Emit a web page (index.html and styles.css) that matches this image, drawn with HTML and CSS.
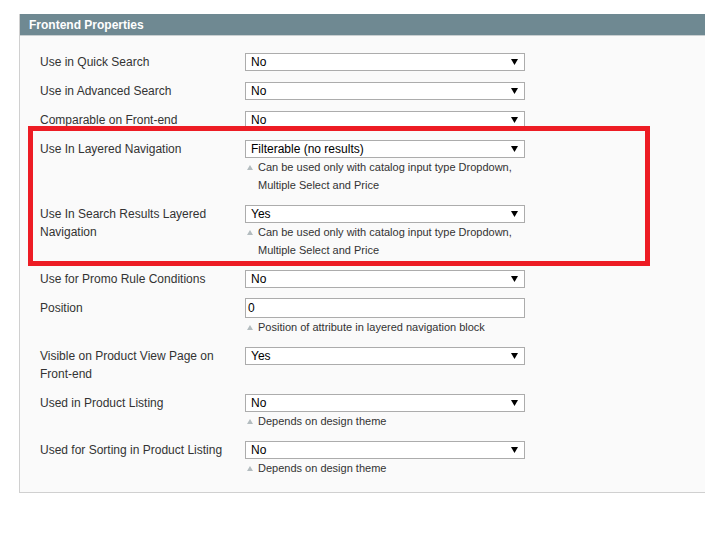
FILE: index.html
```html
<!DOCTYPE html>
<html>
<head>
<meta charset="utf-8">
<link rel="stylesheet" href="styles.css">
</head>
<body>
<div class="panel">
  <div class="panel-head">Frontend Properties</div>
  <div class="panel-body">
    <div class="row">
      <div class="label">Use in Quick Search</div>
      <div class="field"><div class="select"><span>No</span><svg class="arrow" width="7" height="6" viewBox="0 0 7 6"><polygon points="0,0 7,0 3.5,6"/></svg></div></div>
    </div>
    <div class="row">
      <div class="label">Use in Advanced Search</div>
      <div class="field"><div class="select"><span>No</span><svg class="arrow" width="7" height="6" viewBox="0 0 7 6"><polygon points="0,0 7,0 3.5,6"/></svg></div></div>
    </div>
    <div class="row">
      <div class="label">Comparable on Front-end</div>
      <div class="field"><div class="select"><span>No</span><svg class="arrow" width="7" height="6" viewBox="0 0 7 6"><polygon points="0,0 7,0 3.5,6"/></svg></div></div>
    </div>
    <div class="highlight">
      <div class="row">
        <div class="label">Use In Layered Navigation</div>
        <div class="field">
          <div class="select"><span>Filterable (no results)</span><svg class="arrow" width="7" height="6" viewBox="0 0 7 6"><polygon points="0,0 7,0 3.5,6"/></svg></div>
          <div class="note">Can be used only with catalog input type Dropdown, Multiple Select and Price</div>
        </div>
      </div>
      <div class="row">
        <div class="label">Use In Search Results Layered Navigation</div>
        <div class="field">
          <div class="select"><span>Yes</span><svg class="arrow" width="7" height="6" viewBox="0 0 7 6"><polygon points="0,0 7,0 3.5,6"/></svg></div>
          <div class="note">Can be used only with catalog input type Dropdown, Multiple Select and Price</div>
        </div>
      </div>
    </div>
    <div class="row">
      <div class="label">Use for Promo Rule Conditions</div>
      <div class="field"><div class="select"><span>No</span><svg class="arrow" width="7" height="6" viewBox="0 0 7 6"><polygon points="0,0 7,0 3.5,6"/></svg></div></div>
    </div>
    <div class="row row-tight">
      <div class="label label-low">Position</div>
      <div class="field">
        <div class="input">0</div>
        <div class="note">Position of attribute in layered navigation block</div>
      </div>
    </div>
    <div class="row">
      <div class="label">Visible on Product View Page on Front-end</div>
      <div class="field"><div class="select"><span>Yes</span><svg class="arrow" width="7" height="6" viewBox="0 0 7 6"><polygon points="0,0 7,0 3.5,6"/></svg></div></div>
    </div>
    <div class="row">
      <div class="label">Used in Product Listing</div>
      <div class="field">
        <div class="select"><span>No</span><svg class="arrow" width="7" height="6" viewBox="0 0 7 6"><polygon points="0,0 7,0 3.5,6"/></svg></div>
        <div class="note">Depends on design theme</div>
      </div>
    </div>
    <div class="row">
      <div class="label">Used for Sorting in Product Listing</div>
      <div class="field">
        <div class="select"><span>No</span><svg class="arrow" width="7" height="6" viewBox="0 0 7 6"><polygon points="0,0 7,0 3.5,6"/></svg></div>
        <div class="note">Depends on design theme</div>
      </div>
    </div>
  </div>
</div>
</body>
</html>
```

FILE: styles.css
```css
html, body {
  margin: 0;
  padding: 0;
  background: #ffffff;
  overflow: hidden;
}
body {
  font-family: "Liberation Sans", Arial, sans-serif;
  font-size: 12px;
  color: #333333;
}
.panel {
  margin: 14px 0 0 19px;
  border-left: 1px solid #d0d0d0;
  border-bottom: 1px solid #d0d0d0;
  background: #fafafa;
}
.panel-head {
  height: 21px;
  line-height: 23px;
  background: #6f8992;
  border-bottom: 1px solid #c9cfd1;
  color: #ffffff;
  font-weight: bold;
  font-size: 12px;
  padding-left: 9px;
  overflow: hidden;
}
.panel-body {
  padding: 12px 0 9px 20px;
}
.row {
  display: grid;
  grid-template-columns: 205px 280px;
  padding: 5px 0 6px;
}
.row-tight {
  padding-top: 4px;
}
.label {
  line-height: 18px;
  padding-right: 10px;
  color: #333333;
}
.label-low {
  padding-top: 1px;
}
.select {
  box-sizing: border-box;
  height: 18px;
  border: 1px solid #acacac;
  background: #ffffff;
  padding: 0 6px 0 5px;
  display: flex;
  align-items: center;
  justify-content: space-between;
  color: #000000;
  line-height: 16px;
}
.arrow {
  fill: #000000;
  display: block;
}
.input {
  box-sizing: border-box;
  height: 20px;
  border: 1px solid #acacac;
  background: #ffffff;
  padding: 0 2px;
  line-height: 18px;
  color: #000000;
}
.note {
  position: relative;
  padding-left: 13px;
  font-size: 11px;
  line-height: 18px;
  color: #333333;
}
.note::before {
  content: "";
  position: absolute;
  left: 2px;
  top: 7px;
  border-left: 3px solid transparent;
  border-right: 3px solid transparent;
  border-bottom: 5px solid #b3bcbf;
}
.highlight {
  position: relative;
}
.highlight::after {
  content: "";
  position: absolute;
  top: -9px;
  bottom: -1px;
  left: -12px;
  right: 55px;
  border: 5px solid #ed1c24;
  pointer-events: none;
}
```
